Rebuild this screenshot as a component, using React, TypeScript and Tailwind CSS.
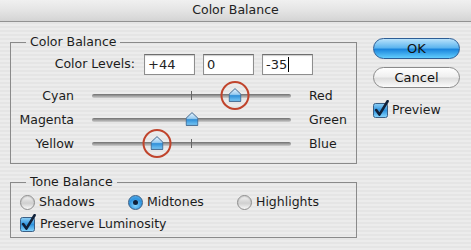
import React from "react";

const font = { fontFamily: '"DejaVu Sans", "Liberation Sans", sans-serif' };

const sliders = [
  { left: "Cyan", right: "Red", value: 44, circled: true },
  { left: "Magenta", right: "Green", value: 0, circled: false },
  { left: "Yellow", right: "Blue", value: -35, circled: true },
];

function Thumb() {
  return (
    <svg width="13" height="14" viewBox="0 0 13 14">
      <defs>
        <linearGradient id="thumbFill" x1="0" y1="0" x2="0" y2="1">
          <stop offset="0" stopColor="#e6f4ff" />
          <stop offset="0.45" stopColor="#9ccdf0" />
          <stop offset="0.55" stopColor="#2f8fd8" />
          <stop offset="1" stopColor="#7ccaf6" />
        </linearGradient>
      </defs>
      <path d="M6.5 0.6 L12.4 6.2 L12.4 13.4 L0.6 13.4 L0.6 6.2 Z" fill="url(#thumbFill)" stroke="#44698f" strokeWidth="1" strokeLinejoin="round" />
    </svg>
  );
}

function Checkbox() {
  return (
    <svg width="17" height="18" viewBox="0 0 17 18" className="shrink-0">
      <defs>
        <linearGradient id="boxFill" x1="0" y1="0" x2="0" y2="1">
          <stop offset="0" stopColor="#8fd0f6" />
          <stop offset="0.5" stopColor="#2e93de" />
          <stop offset="1" stopColor="#8ad8ff" />
        </linearGradient>
      </defs>
      <rect x="0.5" y="3.5" width="14" height="14" rx="2" fill="url(#boxFill)" stroke="#3b5f85" />
      <path d="M3.2 10 L6.4 14.6 L14.6 1.2" fill="none" stroke="#10213a" strokeWidth="2.6" strokeLinecap="round" strokeLinejoin="round" />
    </svg>
  );
}

function Radio({ checked }: { checked?: boolean }) {
  if (checked) {
    return (
      <span className="flex h-[15px] w-[15px] shrink-0 items-center justify-center rounded-full border border-[#3b5f85] bg-[radial-gradient(circle_at_50%_70%,#8ad8ff,#2e93de_55%,#6ab8ec)]">
        <span className="h-[5px] w-[5px] rounded-full bg-[#10213a]" />
      </span>
    );
  }
  return <span className="h-[15px] w-[15px] shrink-0 rounded-full border border-[#8c8c8c] bg-[linear-gradient(#f4f4f4,#cfcfcf_55%,#f8f8f8)] shadow-[inset_0_1px_1px_rgba(0,0,0,0.15)]" />;
}

function Field({ value, caret }: { value: string; caret?: boolean }) {
  return (
    <div className="flex h-[21px] w-[51px] items-center border border-[#8e8e8e] border-t-[#6e6e6e] bg-white pl-[3px] text-[13px] text-[#222] shadow-[inset_0_1px_1px_rgba(0,0,0,0.2)]">
      {value}
      {caret && <span className="ml-[1px] h-[15px] w-[1px] bg-black" />}
    </div>
  );
}

export default function App() {
  return (
    <div
      style={font}
      className="h-[250px] w-[471px] overflow-hidden bg-[repeating-linear-gradient(0deg,#ececec_0px,#ececec_2px,#e5e5e5_2px,#e5e5e5_4px)] text-[12.5px] text-[#1c1c1c]"
    >
      {/* Title bar */}
      <div className="flex h-[22px] items-center justify-center border-b border-[#929292] bg-[linear-gradient(#f0f0f0,#e4e4e4_50%,#d4d4d4)] text-[12.5px] text-[#222]">
        Color Balance
      </div>

      <div className="flex pl-[10px]">
        {/* Left column */}
        <div className="flex w-[347px] flex-col">
          <fieldset className="mt-[12px] border border-[#8a8a8a] px-0 pb-[7px] pt-0">
            <legend className="ml-[15px] px-[4px] leading-[16px]">Color Balance</legend>
            <div className="mt-[4px] flex items-center">
              <div className="w-[124px] text-right">Color Levels:</div>
              <div className="ml-[9px] flex gap-[8px]">
                <Field value="+44" />
                <Field value="0" />
                <Field value="-35" caret />
              </div>
            </div>
            <div className="mt-[9px] flex flex-col">
              {sliders.map((s) => (
                <div key={s.left} className="flex h-[24px] items-center">
                  <div className="w-[63px] text-right">{s.left}</div>
                  <div className="relative ml-[18px] h-[24px] w-[199px]">
                    <div className="absolute left-0 right-0 top-[10px] h-[4px] rounded-full bg-[linear-gradient(#6f6f6f,#a9a9a9_60%,#cfcfcf)]" />
                    <div className="absolute left-[99px] top-[7px] h-[9px] w-[1px] bg-[#666]" />
                    <div
                      className="absolute top-[4px] -translate-x-1/2"
                      style={{ left: `${((s.value + 100) / 200) * 199}px` }}
                    >
                      <Thumb />
                    </div>
                    {s.circled && (
                      <div
                        className="absolute top-[-3px] h-[29px] w-[29px] -translate-x-1/2 rounded-full border-2 border-[#c0442c]"
                        style={{ left: `${((s.value + 100) / 200) * 199}px` }}
                      />
                    )}
                  </div>
                  <div className="ml-[18px]">{s.right}</div>
                </div>
              ))}
            </div>
          </fieldset>

          <fieldset className="mt-[10px] border border-[#8a8a8a] px-0 pb-[3px] pt-0">
            <legend className="ml-[15px] px-[4px] leading-[16px]">Tone Balance</legend>
            <div className="mt-[4px] ml-[9px] flex h-[16px] items-center">
              <div className="flex w-[108px] items-center gap-[4px]">
                <Radio />
                <span>Shadows</span>
              </div>
              <div className="flex w-[109px] items-center gap-[4px]">
                <Radio checked />
                <span>Midtones</span>
              </div>
              <div className="flex items-center gap-[4px]">
                <Radio />
                <span>Highlights</span>
              </div>
            </div>
            <div className="mt-[2px] ml-[9px] flex items-center gap-[3px]">
              <Checkbox />
              <span className="mt-[3px]">Preserve Luminosity</span>
            </div>
          </fieldset>
        </div>

        {/* Right column */}
        <div className="ml-[16px] flex flex-col pt-[16px]">
          <button className="h-[21px] w-[87px] rounded-full border border-[#2d5d95] bg-[linear-gradient(#b8e2fb,#5fb6ef_45%,#1b86dd_55%,#62cdfd)] text-[13px] leading-none text-[#111]">
            OK
          </button>
          <button className="mt-[8px] h-[21px] w-[87px] rounded-full border border-[#8a8a8a] bg-[linear-gradient(#ffffff,#f0f0f0_45%,#dedede_55%,#fbfbfb)] text-[13px] leading-none text-[#111]">
            Cancel
          </button>
          <div className="mt-[10px] flex items-center gap-[2px]">
            <Checkbox />
            <span className="mt-[3px]">Preview</span>
          </div>
        </div>
      </div>
    </div>
  );
}
